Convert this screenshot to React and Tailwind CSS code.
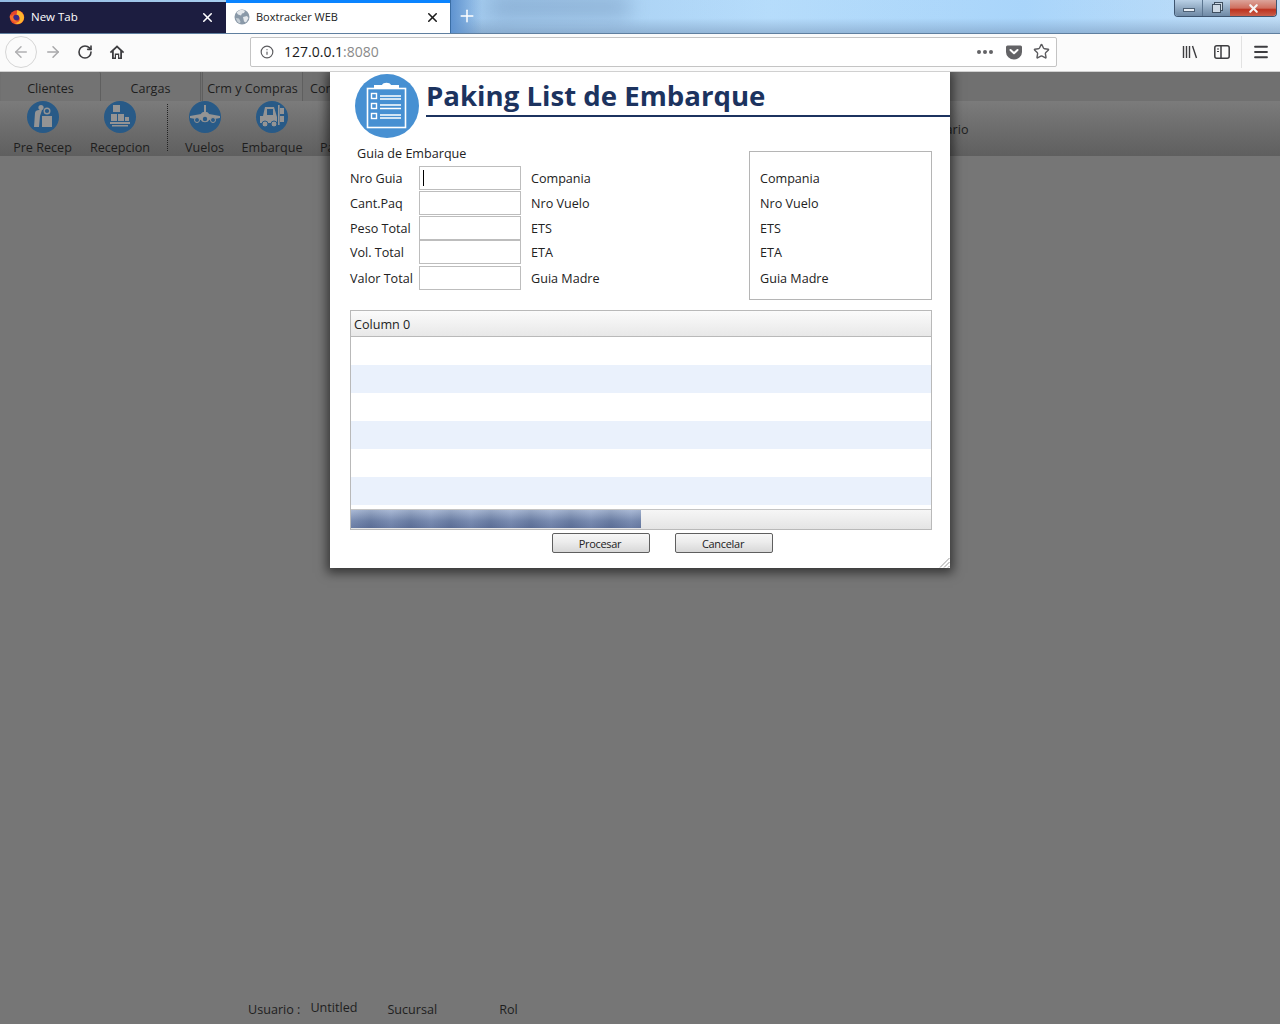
import { ArrowLeft, ArrowRight, RotateCw, Info, X, Plus, Star, Menu } from "lucide-react";

const formRows = [
  { label: "Nro Guia", info: "Compania", mt: "mt-0", caret: true },
  { label: "Cant.Paq", info: "Nro Vuelo", mt: "mt-[1px]" },
  { label: "Peso Total", info: "ETS", mt: "mt-[1px]" },
  { label: "Vol. Total", info: "ETA", mt: "mt-0" },
  { label: "Valor Total", info: "Guia Madre", mt: "mt-[2px]" },
];

const boxRows = [
  { label: "Compania", h: "h-[25px]" },
  { label: "Nro Vuelo", h: "h-[25px]" },
  { label: "ETS", h: "h-[25px]" },
  { label: "ETA", h: "h-[22px]" },
  { label: "Guia Madre", h: "h-[30px]" },
];

const tableRows = ["bg-white", "bg-[#eaf1fc]", "bg-white", "bg-[#eaf1fc]", "bg-white", "bg-[#eaf1fc]"];

const FirefoxLogo = () => (
  <svg width="16" height="16" viewBox="0 0 16 16">
    <circle cx="8" cy="8.400" r="7.200" fill="#e8452c" />
    <path d="M8 1.200c3 .4 6.500 2.700 7 6.700.3 3-2 6.800-6.200 7-1.800.1-3-.4-4-1.300 3 .8 6-.8 6.100-3.600.1-2-1.600-3.200-3.200-3.100C7 5.500 8.500 3.500 8 1.200z" fill="#ffb52c" />
    <circle cx="7.200" cy="8.800" r="3" fill="#3b2a86" />
    <path d="M1 6c1 1 1.500 1 2.500.3L5 5 4 8c.5 3 3.500 4.500 6 3.500-2 2.300-7.500 2-9-2.500-.3-1-.3-2 0-3z" fill="#f7702a" />
  </svg>
);

const GlobeIcon = () => (
  <svg width="16" height="16" viewBox="0 0 16 16">
    <circle cx="8" cy="8" r="7.500" fill="#8a99a8" />
    <path d="M5 1.500c2-.8 5-.6 6 .5l-1 2-2 .5-1 2-3-1-1.500-2zM9 8l4-1 1.500 2-2.500 4.500-2-1z" fill="#e4e8ec" />
    <path d="M2 9l3 .5 1.500 3-.5 2C4 14 2.500 12 2 9z" fill="#c3ccd4" />
  </svg>
);

const HomeIcon = () => (
  <svg width="16" height="16" viewBox="0 0 16 16">
    <path d="M8 1.200 .8 8l1.200 1.200 1-.9V15h4v-4h2v4h4V8.300l1 .9L15.200 8z" fill="#3d3d40" />
    <path d="M8 3.800 4.800 6.800v6.600h1V9.500h4.400v3.900h1V6.800z" fill="#fbfbfb" />
  </svg>
);

const PocketIcon = () => (
  <svg width="16" height="16" viewBox="0 0 16 16">
    <path d="M1.500 1.500h13A1.500 1.500 0 0 1 16 3v5A8 7.500 0 0 1 0 8V3a1.500 1.500 0 0 1 1.500-1.500z" fill="#636366" />
    <path d="M4.500 6 8 9.300 11.500 6" fill="none" stroke="#fff" strokeWidth="2" strokeLinecap="round" strokeLinejoin="round" />
  </svg>
);

const LibraryIcon = () => (
  <svg width="16" height="16" viewBox="0 0 16 16" fill="none" stroke="#3d3d40" strokeWidth="1.400">
    <path d="M1.500 2v12M4.500 2v12M7.500 2v12M10.500 2l4 12" />
  </svg>
);

const SidebarIcon = () => (
  <svg width="16" height="16" viewBox="0 0 16 16" fill="none" stroke="#3d3d40" strokeWidth="1.500">
    <rect x=".800" y="1.800" width="14.400" height="12.400" rx="2" />
    <path d="M7 2v12" />
    <path d="M3 5h2M3 7.500h2" strokeWidth="1" />
  </svg>
);

const WindowControls = () => (
  <div className="absolute right-[3px] top-0 flex h-[17px] w-[103px] overflow-hidden rounded-b-[4px] border border-t-0 border-[#3e5570]">
    <div className="flex w-[28px] items-center justify-center border-r border-[#5b7590] bg-[linear-gradient(#b9d0e6,#8ea7c0_55%,#6f8aa6)]">
      <div className="mt-[3px] h-[4px] w-[12px] border border-[#4d6075] bg-[#e6edf4]" />
    </div>
    <div className="flex w-[27px] items-center justify-center bg-[linear-gradient(#b9d0e6,#8ea7c0_55%,#6f8aa6)]">
      <div className="h-[9px] w-[9px] border border-[#3f4f60] bg-[#cdd9e5] shadow-[2px_-2px_0_-1px_#cdd9e5,2px_-2px_0_0_#3f4f60]" />
    </div>
    <div className="flex flex-1 items-center justify-center bg-[linear-gradient(#dca49a,#cf6f5f_50%,#bd3320_60%,#c9604c)]">
      <X size={13} strokeWidth={4} className="text-[#f4f4f4]" />
    </div>
  </div>
);

const Browser = () => (
  <div className="relative z-10 shrink-0">
    {/* Tab strip */}
    <div className="relative flex h-[33px] overflow-hidden bg-[linear-gradient(rgba(180,222,255,0.1)_55%,rgba(110,140,175,0.45)),linear-gradient(90deg,#8fb6df,#a9cfef_20%,#9fc6ea_35%,#b6dcfb_60%,#a8d4fa_80%,#c2def6)]">
      {/* blurred desktop behind the glass */}
      <div className="absolute left-[490px] top-[-4px] h-[22px] w-[140px] bg-[#6485ad] opacity-40 blur-[10px]" />
      <div className="relative mt-[2px] flex h-[31px] w-[226px] items-center bg-[#1c1d40] pb-px pl-[9px] pr-[11px] text-white">
        <FirefoxLogo />
        <span className="ml-[6px] flex-1 text-[11.500px]">New Tab</span>
        <X size={15} strokeWidth={2.500} />
      </div>
      <div className="relative flex h-[33px] w-[224px] items-center border-t-[3px] border-[#0a84ff] bg-white pb-[2px] pl-[8px] pr-[10px] text-[#1c1c1c]">
        <GlobeIcon />
        <span className="ml-[6px] flex-1 text-[11px]">Boxtracker WEB</span>
        <X size={15} strokeWidth={2.500} />
      </div>
      <div className="relative flex h-[33px] w-[32px] items-center justify-center border-l border-[#3b6ea5] bg-[linear-gradient(90deg,#5f93d0,rgba(156,195,234,0))] pb-[2px]">
        <Plus size={20} strokeWidth={1.800} className="text-white" />
      </div>
      <WindowControls />
    </div>
    {/* Address bar */}
    <div className="flex h-[39px] items-center border-t border-[#5f7f9f] border-b border-b-[#d0d0d0] bg-[#fbfbfb] pb-[2px] pl-[5px]">
      <div className="flex h-[32px] w-[32px] items-center justify-center rounded-full border border-[#d6d6d6]">
        <ArrowLeft size={18} className="text-[#b0b0b2]" />
      </div>
      <ArrowRight size={18} className="ml-[7px] text-[#a8a8aa]" />
      <RotateCw size={16} strokeWidth={2.400} className="ml-[15px] text-[#3d3d40]" />
      <div className="ml-[16px]">
        <HomeIcon />
      </div>
      <div className="ml-[125px] flex h-[30px] w-[807px] items-center rounded-[2px] border border-[#c4c4c4] bg-white pl-[9px] pr-[6px]">
        <Info size={14} className="text-[#5c5c5f]" />
        <span className="ml-[10px] flex-1 text-[14px]">
          <span className="text-[#1a1a1a]">127.0.0.1</span>
          <span className="text-[#8a8a8a]">:8080</span>
        </span>
        <div className="flex gap-[2px]">
          <div className="h-[4px] w-[4px] rounded-full bg-[#636366]" />
          <div className="h-[4px] w-[4px] rounded-full bg-[#636366]" />
          <div className="h-[4px] w-[4px] rounded-full bg-[#636366]" />
        </div>
        <div className="ml-[13px]">
          <PocketIcon />
        </div>
        <Star size={17} strokeWidth={2} className="ml-[11px] text-[#5c5c5f]" />
      </div>
      <div className="ml-[125px]">
        <LibraryIcon />
      </div>
      <div className="ml-[16px]">
        <SidebarIcon />
      </div>
      <div className="ml-[11px] h-[32px] w-px bg-[#e2e2e2]" />
      <Menu size={18} strokeWidth={2.400} className="ml-[10px] text-[#3d3d40]" />
    </div>
  </div>
);

const RoundIcon = ({ children }) => (
  <svg width="32" height="32" viewBox="0 0 32 32">
    <circle cx="16" cy="16" r="16" fill="#285a87" />
    {children}
  </svg>
);

const ToolItem = ({ label, w, children }) => (
  <div className={`flex shrink-0 flex-col items-center ${w}`}>
    {children}
    <span className="mt-[6px] whitespace-nowrap text-[12.600px] leading-[18px]">{label}</span>
  </div>
);

const AppShell = () => (
  <div className="flex flex-1 flex-col bg-[#767676] text-[#1e1e1e]">
    {/* Menu tabs */}
    <div className="flex h-[29px] bg-[#707070] pl-px text-[12.600px] leading-[33px]">
      <div className="h-full w-[100px] rounded-t-[2px] border-r border-[#5f5f5f] bg-[#737373] text-center">Clientes</div>
      <div className="h-full w-[100px] border-r border-[#5f5f5f] bg-[#737373] text-center">Cargas</div>
      <div className="ml-[1px] h-full w-[101px] border-x border-[#5f5f5f] bg-[#737373] text-center">Crm y Compras</div>
      <div className="ml-[1px] h-full pl-[6px]">Con</div>
    </div>
    {/* Ribbon */}
    <div className="flex h-[55px] items-start bg-[linear-gradient(#7b7b7b,#5f5f5f)] pl-[3px]">
      <ToolItem label="Pre Recep" w="w-[79px]">
        <RoundIcon>
          <g fill="#949494">
            <circle cx="14" cy="6.500" r="2.600" />
            <path d="M8 12c0-2 2-3 4-3h3l-2 6-1 11H7z" />
            <rect x="15" y="15" width="10" height="11" />
            <circle cx="20" cy="10" r="2.800" fill="none" stroke="#949494" strokeWidth="1.400" />
          </g>
        </RoundIcon>
      </ToolItem>
      <ToolItem label="Recepcion" w="w-[76px]">
        <RoundIcon>
          <g fill="#949494">
            <rect x="6" y="21" width="20" height="2" />
            <rect x="8" y="24" width="16" height="1.500" />
            <rect x="7" y="13" width="6" height="7" />
            <rect x="14" y="13" width="6" height="7" />
            <rect x="21" y="16" width="4" height="4" />
            <rect x="9" y="4" width="7" height="7" />
          </g>
        </RoundIcon>
      </ToolItem>
      <div className="ml-[9px] mt-[3px] h-[47px] border-l border-dotted border-[#222]" />
      <ToolItem label="Vuelos" w="w-[73px]">
        <RoundIcon>
          <g fill="#949494">
            <rect x="15" y="4" width="2" height="7" />
            <path d="M1 15l11-2c1-3 7-3 8 0l11 2v2l-11 2c-1 3-7 3-8 0L1 17z" />
          </g>
          <circle cx="8" cy="19" r="2.500" fill="#285a87" stroke="#949494" />
          <circle cx="24" cy="19" r="2.500" fill="#285a87" stroke="#949494" />
          <circle cx="16" cy="18" r="2.200" fill="#285a87" />
        </RoundIcon>
      </ToolItem>
      <ToolItem label="Embarque" w="w-[62px]">
        <RoundIcon>
          <g fill="#949494">
            <path d="M4 15h3l2-9h9l3 10v6H4z" />
            <rect x="22" y="4" width="1.600" height="20" />
            <rect x="24" y="7" width="4" height="6" />
            <rect x="24" y="15" width="4" height="6" />
          </g>
          <rect x="11" y="8" width="6" height="6" fill="#285a87" />
          <circle cx="9" cy="23" r="3" fill="#949494" stroke="#285a87" />
          <circle cx="18" cy="23" r="3" fill="#949494" stroke="#285a87" />
        </RoundIcon>
      </ToolItem>
      <span className="mt-[38px] pl-[17px] text-[12.600px] leading-[18px]">Pa</span>
      <span className="ml-[611px] mt-[20px] text-[12.600px] leading-[18px]">ario</span>
    </div>
    {/* Status line */}
    <div className="mt-auto flex h-[28px] text-[12.600px]">
      <span className="ml-[248px] mt-[5px]">Usuario :</span>
      <span className="ml-[10px] mt-[3px]">Untitled</span>
      <span className="ml-[30px] mt-[5px]">Sucursal</span>
      <span className="ml-[62px] mt-[5px]">Rol</span>
    </div>
  </div>
);

const ClipboardLogo = () => (
  <svg width="64" height="64" viewBox="0 0 64 64" className="shrink-0">
    <circle cx="32" cy="32" r="32" fill="#4790d2" />
    <g fill="none" stroke="#fff">
      <rect x="12.500" y="14.500" width="38" height="39" strokeWidth="1.600" />
      <rect x="16.500" y="19.500" width="5" height="5" strokeWidth="1.400" />
      <rect x="16.500" y="29.500" width="5" height="5" strokeWidth="1.400" />
      <rect x="16.500" y="39.500" width="5" height="5" strokeWidth="1.400" />
      <path d="M25 22h21M25 25h21M25 31h21M25 34.500h21M25 41h21M25 44h21" strokeWidth="1.500" />
    </g>
    <path d="M19 14v-3h8c1-3 8-3 9 0h8v3z" fill="#fff" />
  </svg>
);

const GripIcon = () => (
  <svg width="12" height="12" viewBox="0 0 12 12" className="absolute bottom-0 right-0" stroke="#9a9a9a" fill="none">
    <path d="M2 11.500 11.500 2M6 11.500 11.500 6M10 11.500l1.500-1.500" />
  </svg>
);

const Btn = ({ label }) => (
  <button className="h-[20px] w-[98px] rounded-[2px] border border-[#5f5f5f] bg-[linear-gradient(#f7f7f7,#ececec_45%,#d8d8d8)] pr-[2px] text-[11px] leading-[20px] tracking-[-0.3px] text-[#222]">
    {label}
  </button>
);

const Dialog = () => (
  <div className="absolute left-[330px] top-[72px] flex h-[496px] w-[620px] flex-col bg-white text-[#222] shadow-[0_2px_10px_3px_rgba(0,0,0,0.55)]">
    <div className="flex h-[66px] pl-[25px] pt-[2px]">
      <ClipboardLogo />
      <div className="ml-[7px] flex-1">
        <div className="h-[43px] border-b-2 border-[#1c335f] text-[27.600px] font-bold leading-[42px] text-[#1c335f]">
          Paking List de Embarque
        </div>
      </div>
    </div>
    <div className="flex h-[162px] pl-[20px] pr-[18px] pt-[13px] text-[12.600px]">
      <div className="w-[399px]">
        <div className="-mt-[6px] mb-[6px] h-[15px] pl-[7px] leading-[18px]">Guia de Embarque</div>
        {formRows.map((row) => (
          <div key={row.label} className={`flex h-[24px] items-center ${row.mt}`}>
            <span className="w-[69px] translate-y-[1px] whitespace-nowrap">{row.label}</span>
            <div className="flex h-[24px] w-[102px] items-center border border-[#bdbdbd] pl-[3px]">
              {row.caret && <div className="h-[16px] w-px bg-black" />}
            </div>
            <span className="ml-[10px] translate-y-[1px]">{row.info}</span>
          </div>
        ))}
      </div>
      <div className="mb-[11px] flex h-[149px] w-[183px] flex-col border border-[#b5b5b5] pl-[10px] pt-[15px]">
        {boxRows.map((row) => (
          <div key={row.label} className={`flex items-center ${row.h}`}>
            {row.label}
          </div>
        ))}
      </div>
    </div>
    {/* Grid */}
    <div className="ml-[20px] mt-[10px] h-[220px] w-[582px] border border-[#b9b9b9]">
      <div className="flex h-[26px] items-center border-b border-[#b9b9b9] bg-[linear-gradient(#fbfbfb,#e8e8e8)] pl-[3px] pt-[3px] text-[12.600px]">
        Column 0
      </div>
      <div className="h-[172px]">
        {tableRows.map((bg, i) => (
          <div key={i} className={`h-[28px] ${bg}`} />
        ))}
      </div>
      <div className="h-[20px] border-t border-[#c4c4c4] bg-[linear-gradient(#f6f6f6,#e4e4e4)]">
        <div className="h-[18px] w-[290px] bg-[repeating-linear-gradient(90deg,rgba(255,255,255,0.08),rgba(0,0,0,0.06)_20px,rgba(255,255,255,0.08)_40px),linear-gradient(#a3b4d2,#6f83ab_60%,#5f739e)]" />
      </div>
    </div>
    <div className="mt-[3px] flex gap-[25px] pl-[222px]">
      <Btn label="Procesar" />
      <Btn label="Cancelar" />
    </div>
    <GripIcon />
  </div>
);

const App = () => (
  <div className="relative flex h-screen w-full flex-col overflow-hidden [font-family:'Open_Sans',sans-serif]">
    <Browser />
    <AppShell />
    <Dialog />
  </div>
);

export default App;
